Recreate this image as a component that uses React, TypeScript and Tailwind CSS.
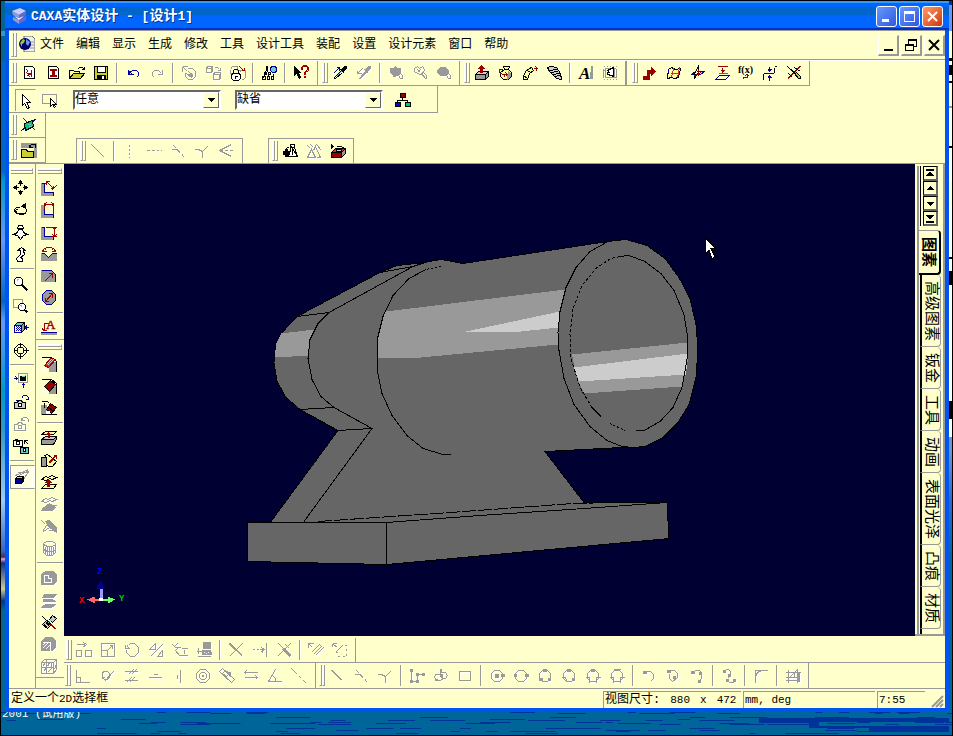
import type { ReactNode } from "react";

/* Sixteen-pixel toolbar art. Each segment is "<stroke><fill> <path>", joined by "|". */
const PALETTE: Record<string, string> = {
  k: "#000000",
  r: "#990000",
  R: "#cc3333",
  b: "#000099",
  B: "#0000ff",
  g: "#999999",
  s: "#cccccc",
  w: "#ffffff",
  y: "#cccc33",
  Y: "#ffff99",
  c: "#66cccc",
  e: "#00cc66",
  n: "none",
};

const ART: Record<string, string> = {
  newPage: "kw M3 1h8l2 2v10h-10z|rr M7 8h3v1h-3z|rn M5 4l2 3M10 4v3M5 7l2 2M6 10l3 1M10 8v3",
  newDrawing: "kw M3 1h8l2 2v10h-10z|rr M5 4h6v1h-6zM7 6h2v3h-2zM5 10h6v1h-6z",
  open: "kY M0 13v-8h4l1 1h5v2|ky M0 13l4-5h11l-4 5z|kn M8 4l2-2h3l2 2M15 1v3h-3",
  save: "ky M1 1h13v13h-13z|kw M4 1h8v6h-8z|kk M4 10h8v4h-8z|ww M9 11h1v2h-1z",
  undo: "bn M3 4v5h5M3 8l4-3h4l2 2v3l-2 2M4 5v3M5 8h1",
  redo: "gn M13 4v5h-5M12 8l-3-3h-4l-2 2v3l2 2",
  regen: "gn M1 1h5M1 1v5M2 2l4 4M6 3h5l3 3v5l-3 3h-4l-3-3v-4M5 8l5 4M7 6l4 4|gg M8 9l2-1 1 2-1 2z",
  cubes: "gn M1 3l1-2h5v5l-1 1h-5zM1 3h5v4M6 3l1-2M8 9l1-2h6v6l-1 1h-6zM8 9h6v5M9 2h3l2 2M15 2v3h-3",
  lock: "gn M1 4l2-3h5v4M1 4v4h2M10 7l2-2h4v7l-2 2h-2M9 5l3 0|rn M10 1l4 4M15 2v3h-3|kw M3 8h7l1 2v3l-2 2h-5l-2-2v-3z|kn M4 8v-3l1-1h3l1 1v3M5 11h3M6 11v2",
  find: "kn M5 1h1v2h-1zM5 4l-3 9M6 4l2 9M1 11h3v3h-3zM6 11h2v3h-2zM10 11h2v3h-2zM3 7h2v2h-2zM7 7h2v2h-2z|bc M10 1h4l1 2v2l-1 2h-3l-2-2v-2z|kn M12 8v4",
  help: "kk M1 1l6 6h-2l2 5-1 1-3-5-2 2z|rn M8 4v-2l2-2h3l2 2v3l-3 2v2M9 4v-2l1-1h3l1 1v2l-3 3v2|rr M11 11h1v1h-1z",
  pick: "kk M12 1h2v2l-3 3-2-2z|kn M8 4l4 4M9 5l-7 7v1h1l7-6M3 13l-1 1|bn M1 8l6-6M7 2h-3M7 2v3|cn M4 11l5-5",
  apply: "gg M12 1h2v2l-3 3-2-2zM9 6l1 1-6 6h-1z|gn M8 4l4 4M1 5v3h4M1 8l5-5",
  fillAll: "gg M2 3h3l2-2 2 2h3v5l-2 2h-5l-3-3z|gn M9 8l3 5h2v-3l-3-3M4 11h3",
  fillPart: "gn M2 3l3-2 2 2 3-2 2 3-1 4-3 1-3-1-3-2zM5 4l3 3M8 4l-3 3M9 8l4 5h1v-3l-3-3z",
  fillOne: "gg M4 2h5l3 3v3l-3 2h-5l-3-3v-2z|gn M9 8l3 5h2v-3l-3-3",
  extrude: "kg M1 9l3-3h10v5l-3 3h-10z|ks M1 9l3-3h10l-3 3z|kn M11 9v5|rr M7 0l3 3h-2v4h-2v-4h-2z",
  spin: "kY M5 1h6l-1 3 3 3v4l-3 3h-5l-3-3v-4l4-3z|gg M10 6l2 2v3l-3 3z|kn M6 4h4|rn M4 4h-3v3l3 2h5M7 7l2 2-2 2M6 8v3",
  sweep: "kY M1 14v-4l3-5 5-3 2 3-4 3-2 6z|kn M1 11l4 1M5 5l3 2|rn M11 3h4M13 1l2 2-2 2M14 2v3",
  loft: "ks M1 2l3-1 6 1 4 6 1 6-5-1-7-7z|kn M2 5l9-1M4 7l8-1M6 9l8-1M8 11l6-1",
  frameText: "gn M1 1h1M4 1h1M7 1h1M10 1h1M13 1h1M1 14h1M4 14h1M7 14h1M10 14h1M13 14h1M1 3v9M2 4v1M3 3v9M12 3v9M14 3v9M2 12h11M2 3h11|kw M5 5l6-3v9l-2-1-4-1v-2h2z",
  arrow: "rr M1 11v3h6v-6h2v2l4-4-4-4v3h-4v6z",
  surface: "kY M2 4l3-2 4 2 5-1-2 9-4 1-3-1-4 1z|Rn M7 3l-2 9M4 8h8M13 2l-2 10|bn M1 12l1-8",
  plane: "bn M1 9h9l4-3h-8M1 9l4-3|kn M8 1l-4 7v5l4-6z|rn M4 10l7-3M8 4v6",
  planes: "rn M3 1h10M8 2v5M6 5h4M7 6h2|Rn M4 8h9|bn M1 14l4-4h10l-4 4z",
  curve: "kn M1 14v-5l1-1h9l1-1v-5M0 14h1M12 1h2|bb M6 4h3l-2 2zM6 12h3l-2-2z|bn M7 1v4M7 11v4M4 8h7",
  erase: "rn M1 14l13-13M1 13l12-12|kn M1 1l12 11M8 2l6 4M2 8l4 4|ky M8 8l4 5h2v-2l-4-4z|cc M8 8l1-1",
  pointer: "kw M4 1l8 8h-4l3 5-2 1-3-5-2 2z",
  boxSelect: "gn M0 2h14v9h-14z|kw M8 6l6 6h-3l2 2-1 1-2-3-2 2z",
  nodes: "kr M5 1h5v4h-5z|kB M0 10h5v4h-5z|ke M10 10h5v4h-5z|kn M7 5v3M2 10v-2h10v2",
  sheet: "rn M2 1l12 12|bn M0 13l15-12|ke M3 6l8-3 1 6-8 4z|cn M6 7h3M7 9h3",
  folder: "gg M0 1h15v4h-15zM13 5h2v10h-2z|ky M0 7h5l1 2h6v6h-12z|kn M8 5l2-3h4v3M8 2v3h3",
  line: "gn M1 1l13 13",
  vDash: "gn M7 1v2M7 5v2M7 9v2M7 13v1",
  hDash: "gn M0 7h3M5 7h3M10 7h2M14 7h1",
  tangent: "gn M1 6h5l4 4M3 2l3 3M7 6l3 4M12 10h0v2M13 13l1 1",
  perp: "gn M0 6h4l4 2v6M8 8l5-5",
  bisect: "gn M1 7l12-6M1 7h3M6 7h3M11 7h3M1 7l12 6",
  gearTri: "kk M1 8h2v-2h2v2h2v3h-2v2h-2v-2h-2z|kw M9 3l-3 10h9z|kn M8 1h4v3h-4zM4 5l3-2M12 4l3 9M10 5v6",
  triangles: "gn M1 14l4-8 4 8zM7 7l2-4 5 11h-4M1 2l3 3M4 1l3 3M10 1l5 6",
  printBlock: "kr M1 9h10v5h-10z|kg M11 9l4-4v5l-4 4z|kR M1 9l4-4h10l-4 4z|ks M6 6h5v2h-5z|kk M1 1l2 2-2 2z|kn M6 3h5l3 2",
  move: "kk M7 0l2 3h-4zM7 14l2-3h-4zM0 7l3-2v4zM14 7l-3-2v4z|kn M7 3v2M7 9v2M3 7h2M9 7h2",
  rotate: "kn M6 5h-3l-2 2v2l2 2h8l2-2v-2l-1-1M5 6l-3 2 1 2 3 2h4l3-2|kk M8 4l4-3v4z",
  lookAt: "kw M5 1h4l1 3h-6zM5 5h4l1 3 4 2-4 1-3 4-3-4-4-1 4-2z",
  walk: "kw M4 4l4-3 4 3h-2l1 4-4 3 2 1v3h-5l-1-3 4-4v-4z",
  zoom: "kw M3 1h4l2 2v4l-2 2h-4l-2-2v-4z|cn M3 3h2M3 5l2-2|kn M8 8l6 6M9 8l6 6M8 9l6 6",
  zoomWin: "gn M0 1h9v8h-9z|kw M7 5h3l2 2v3l-2 2h-3l-2-2v-3z|cn M7 7l2 1|kn M11 11l4 3M11 12l3 3",
  cubeView: "kc M1 5l3-3h7l-2 3z|bw M1 5h7v7h-7z|kg M8 5l3-3v7l-3 3z|bn M2 6h1M4 6h1M6 6h1M3 7h1M5 7h1M2 8h1M4 8h1M6 8h1M3 9h1M5 9h1M2 10h1M4 10h1M6 10h1|bb M11 7l2-2v4z|bn M12 7h3",
  target: "kn M5 2h4l4 4v4l-4 4h-4l-4-4v-4zM7 0v5M7 11v5M0 8h4M10 8h5|bn M5 5h4l1 1v4l-1 1h-4l-1-1v-4z",
  fit: "gn M5 1h9v9h-9z|kk M7 4h5v4h-5z|cn M8 4h3l1-1|bn M0 6h4M2 4l2 2-2 2M10 15v-4M8 13l2-2 2 2",
  camera: "ks M1 8h3l1-2h3l1 2h3v6h-11z|kw M5 9h3v3h-3z|bn M8 4l2-3h3l2 2v2M15 2v3h-3M2 6h2",
  cameraOff: "gn M1 8h3l1-2h3l1 2h3v6h-11zM5 9h3v3h-3zM8 4l2-3h3l2 2v2M8 1v3h3",
  cameras: "kw M0 2h9v6h-9zM3 3h3v3h-3z|kn M1 1h3M11 2l4 4M11 2h3M11 2v3|kc M7 9h8v6h-8z|kw M10 10h2v3h-2z",
  perspective: "gn M1 6l13-6M5 6l9-5M9 10l5-8M3 3h11|kb M1 9h6v5h-6z|ks M1 9l2-2h6l-2 2z|kk M7 9l2-2v5l-2 2z",
  dimAlign: "gg M0 3h3v9h9v3h-12z|bn M0 3h3v9h9v3|rn M5 1l7 7M5 1v3M5 1h3M12 8v-3M12 8h-3M3 4l3-3M10 10l5-5",
  dimHoriz: "gg M0 3h3v9h9v3h-12z|bn M3 3v9h9v3|rn M3 0v6M12 0v12M3 2h9M5 0l-2 2 2 2M10 0l2 2-2 2",
  dimVert: "gg M0 3h3v9h9v3h-12z|bn M0 3h3v9h9v3|rn M4 3h11M10 12h5M13 3v9M11 5l2-2 2 2M11 10l2 2 2-2",
  dimAngle: "gg M0 7h3l4 4 4-4h4v7h-15z|bn M0 7h3l4 4 4-4h4|rn M0 6l3-4M15 6l-3-4M3 4l2-3h5l2 3M2 2v3h3M13 2v3h-3",
  dimRadius: "gg M0 2h10l4 4v7h-14z|bn M0 2h10l4 4v7|rn M3 13l8-8M11 5h-4M11 5v4",
  dimDiameter: "gg M5 0h5l4 4v6l-4 4h-5l-4-4v-6z|bn M5 0h5l4 4v6l-4 4h-5l-4-4v-6z|rn M4 11l7-8M4 11v-4M4 11h3M11 3v4M11 3h-4",
  fillet: "gg M8 6h7v9h-7z|kn M0 1h10l5 4v10|rR M3 9l6-7 5 1-7 8z|sn M5 8l5-5M6 9l6-6|wn M1 12l5 2M1 13l3 1",
  chamfer: "gg M8 6h7v9h-7z|kn M0 1h10l5 4v10|kr M3 8l6-6 5 4-6 7z|wn M1 12l5 2M1 13l3 1",
  draft: "gg M0 5h5v9h-5z|kn M0 1h6l2 2M3 2v5M0 14h15|kr M5 9l4-6 6 4-5 6z|kn M7 7l5 4M9 5l4 4|ww M5 11h3v2h-3z",
  pull: "kg M0 9l4-3h11v3l-3 5h-12z|kY M0 4l4-3h11l-3 3z|ks M0 9l4-3h11l-3 3z|rr M7 2l2 2h-1v3h-1v-3h-2z",
  bend: "kg M0 5h5v9h-5z|kY M3 3l3-1 9 7-4 5h-4l-2-2v-7z|rn M7 11l4-5 4-3M12 3h3v3M8 11l4-5",
  raise: "kY M0 5l4-3 3 1 3-2 5 2-4 2-3-1-3 2zM0 14l4-4h11l-3 4z|rr M7 5l3 3h-2v4h-2v-4h-2z",
  thicken: "gn M0 5l4-3 3 1 3-2 5 2-4 2-3-1-3 2zM1 12l4-2M15 9h-4|gg M0 14l4-4 4-3 6 4-3 3z",
  trimFace: "gg M4 3l4-1 7 7v5l-8-6z|gn M0 2l4 4M1 13l4-6M2 13l6-4M8 12l7-1",
  wrap: "gn M2 3l3-2h6l3 2v9l-3 3h-6l-3-3zM2 4l4 2h5l3-2M4 6v8M6 6v9M8 6v9M10 6v9M12 6v7M2 9l4 2h5l3-2",
  shell: "gg M0 4l4-3h8l3 3v7l-3 3h-12z|wn M3 5h4v3h3v4h-7z",
  slab: "gg M3 2h12l-3 3h-11zM2 7h9l3 2h-12zM4 12h10l-4 3h-10z|wn M2 6h12M1 11h12",
  detach: "ks M8 5l3-4 4 3-4 4zM1 10l4-4 4 5-3 3z|kn M1 2l14 13M2 9l4 5M4 7l4 5|cn M6 9l4-4|rn M9 10l5 5M10 10l5 5",
  section: "gg M0 5l4-4h7l3 3v7l-3 3h-11z|wn M1 6h8v8M1 9l3-3M1 12l6-6M4 13l4-4",
  block: "gn M0 4l3-3h12v10l-3 4h-12zM0 4h12v11M12 4l3-3M5 15v-14M0 9h12M1 8l3-4M2 13l3-4M6 14l5-5M8 4l-2 4M13 11l2-6M10 4v4",
  glue: "gn M0 8h5v6h-5zM9 8h6v6h-6zM0 2h8M7 0l3 2-3 2M8 1v3",
  scale: "gn M1 1h13v13h-13zM1 8h6v6M7 8l4-4M9 3h3v3",
  turn: "gn M4 3l2-2h4l4 4v5l-4 4h-4l-4-4v-3M1 2v4h4M3 3l1 3",
  mirror: "gn M1 7l6-6v6zM9 14h5v-6zM2 14l12-12",
  offset: "gn M0 2l3 3h5M3 8l4 5h8M9 6h6M12 7v4M5 1l-4 4M3 8l3-3",
  pattern: "gg M7 0h7v6h-7zM6 8h8l1 4h-9z|gn M2 5v6M0 9h5M1 14h13|wn M7 10h1M9 11h1M11 10h1",
  cross: "gn M1 1l13 13M2 1l12 12M1 2l6 6M14 1l-13 13",
  extend: "gn M0 7h2M4 7h2M7 7h5M9 5l3 2-3 2M10 5v5M14 1v13M13 1h1M13 14h1",
  crossPen: "gn M1 14l13-13M2 1l5 5M9 2l4 4|gg M6 7l2-1 6 6-1 2z",
  dual: "gn M0 1v4M0 1h5M0 1l4 4M3 10l8-8 2 2-8 8M7 13l8-8",
  dualDash: "gn M0 1v3M0 1h4M1 2l4 3M3 10l7-7M12 3h2M14 6v2M14 11v2M12 14h-2M7 14h-2M5 11l-1-2",
  square: "gn M1 1v13h13M1 9h4v5",
  noTangent: "gn M4 3h4l2 2v4l-2 2h-3l-2-2v-4zM5 13l9-10M3 10l3-2",
  parallel: "gn M1 3h13M1 12h13M5 6l5-5M8 6l5-5M3 14l5-5M6 14l5-5",
  horiz: "gn M1 9h13M6 6h4",
  vert: "gn M9 1v13M6 6v4",
  concentric: "gn M5 1h5l4 4v5l-4 4h-5l-4-4v-5zM6 4h3l2 2v3l-2 2h-3l-2-2v-3z|gg M7 7h1v1h-1z",
  slot: "gn M0 3l3-3 12 11-3 3zM3 5l3-3 4 3-3 3zM7 4h4v2",
  equal: "gn M1 4h13M1 9h13M3 2l-2 2 2 2M12 7l2 2-2 2",
  angle: "gn M8 1l-7 12h13M5 7l3 3v3",
  gapLine: "gn M0 0l6 6M8 8l2 2M12 12l3 3",
  shortLine: "gn M2 2l10 10M3 2l10 10",
  poly: "gg M1 1h2v2h-2zM1 12h2v2h-2zM7 12h2v2h-2zM7 5h2v2h-2zM13 5h2v2h-2z|gn M2 2v11h6v-7h6",
  spline: "gn M2 6h4l3 3v2l-3 1h-3l-2-3zM7 4h5l2 3-2 3h-3l-2-3z|gg M7 1h1v2h-1zM7 6h2v2h-2zM2 11h2v1h-2z",
  rect: "gn M2 3h11v9h-11z",
  circleDot: "gn M5 2h5l3 3v5l-3 3h-5l-3-3v-5z|gg M6 6h3v3h-3zM12 6h3v2h-3z",
  circleTwo: "gn M5 2h5l3 3v5l-3 3h-5l-3-3v-5z|gg M1 6h2v2h-2zM12 6h3v2h-3z",
  circleThree: "gn M5 2h5l3 3v5l-3 3h-5l-3-3v-5z|gg M6 1h3v2h-3zM2 10h3v2h-3zM11 10h2v2h-2z",
  circleTan: "gn M5 2h5l3 3v5l-3 3h-5l-3-3v-5zM0 9h4l2 5|gg M6 1h3v2h-3zM11 10h2v2h-2z",
  circleTan2: "gn M5 2h5l3 3v5l-3 3h-5l-3-3v-5zM0 9h4l0 5M15 9h-4l0 5|gg M6 1h3v2h-3z",
  circleTan3: "gn M5 2h5l3 3v5l-3 3h-5l-3-3v-5zM4 1h7M0 9h4l0 5M15 9h-4l0 5",
  arcA: "gg M2 3h3v2h-3z|gn M5 3h4l3 3v4l-3 3",
  arcB: "gg M2 2h3v2h-3zM8 8h2v2h-2z|gn M5 2h4l3 3v4l-5 4-3-3v-5",
  arcC: "gg M2 3h3v2h-3zM10 4h2v2h-2zM9 12h2v2h-2z|gn M5 2h5l2 3v5l-2 3",
  bspline: "gg M2 2h2v2h-2zM7 6h2v2h-2zM5 11h2v2h-2zM12 11h2v2h-2z|gn M4 1h3l2 2v3M6 10l2-2M7 14h5",
  corner: "gn M2 14v-12h12M2 8l2-4 4-2",
  project: "gg M12 5h2v8h-2z|gn M0 4h15M0 9h12M0 12h12M3 1v13M12 1v13M4 9l8-8M9 4v5",
};

function Art({ name, off }: { name: string; off?: boolean }) {
  const parts = ART[name].split("|");
  return (
    <svg width="16" height="16" viewBox="0 0 16 16" shapeRendering="crispEdges" className="block shrink-0 overflow-visible" aria-hidden="true">
      {off && (
        <g transform="translate(1.5 1.5)">
          {parts.map((p, i) => (
            <path key={i} d={p.slice(3)} stroke="#ffffff" fill={p[1] === "n" ? "none" : "#ffffff"} />
          ))}
        </g>
      )}
      <g transform="translate(.5 .5)">
        {parts.map((p, i) => (
          <path key={i} d={p.slice(3)} stroke={PALETTE[p[0]]} fill={PALETTE[p[1]]} />
        ))}
      </g>
    </svg>
  );
}

function Letters({ kind }: { kind: string }) {
  if (kind === "letterA")
    return (
      <svg width="16" height="16" viewBox="0 0 16 16" className="block overflow-visible" aria-hidden="true">
        <path d="M13 1l2 0v13h-3z" fill="#999999" shapeRendering="crispEdges" />
        <text x="1" y="14" fontSize="17" fontWeight="bold" fontStyle="italic" fontFamily="Liberation Serif, serif">A</text>
      </svg>
    );
  if (kind === "fx")
    return (
      <svg width="16" height="16" viewBox="0 0 16 16" className="block overflow-visible" aria-hidden="true">
        <text x="0" y="8" fontSize="10" fontWeight="bold" fontFamily="Liberation Serif, serif">f(x)</text>
        <path d="M5 14v-2h4v-3M7 11l2-2 2 2" fill="none" stroke="#990000" shapeRendering="crispEdges" />
      </svg>
    );
  return (
    <svg width="16" height="16" viewBox="0 0 16 16" className="block overflow-visible" aria-hidden="true">
      <text x="5" y="9" fontSize="13" fontFamily="Liberation Serif, serif" fill="#990000" stroke="#990000" strokeWidth=".4">A</text>
      <path d="M8 3H4L3 11M1 8l2 3 3-1" fill="none" stroke="#990000" shapeRendering="crispEdges" />
      <path d="M0 13h16v2H0z" fill="#999999" />
      <path d="M0 12h16v1H0z" fill="#000099" />
    </svg>
  );
}

const TEXT_ICONS = ["letterA", "fx", "letterNote"];

/* "-" is a separator; a trailing "!" marks a disabled tool. */
function Tools({ items, vertical }: { items: string; vertical?: boolean }) {
  return (
    <>
      {items.split(" ").map((item, i) => {
        if (item === "-")
          return vertical ? (
            <span key={i} className="mx-px flex h-2 items-center">
              <span className="h-0.5 w-full border-b border-white bg-[#999999]" />
            </span>
          ) : (
            <span key={i} className="flex w-2 justify-center">
              <span className="my-0.5 w-0.5 border-r border-white bg-[#999999]" />
            </span>
          );
        const off = item.endsWith("!");
        const name = off ? item.slice(0, -1) : item;
        return (
          <button key={i} type="button" aria-label={name} disabled={off} className={vertical ? "flex h-[22px] items-center justify-center pr-0.5" : "flex w-6 items-center justify-center"}>
            {TEXT_ICONS.includes(name) ? <Letters kind={name} /> : <Art name={name} off={off} />}
          </button>
        );
      })}
    </>
  );
}

function Grip() {
  return (
    <span className="my-0.5 flex shrink-0">
      <span className="w-[3px] border-r border-b border-l border-[#999999] border-l-white" />
      <span className="w-[3px] border-r border-b border-l border-[#999999] border-l-white" />
    </span>
  );
}

function GripH() {
  return (
    <span className="mx-0.5 mb-[3px] block pt-1">
      <span className="block h-[3px] border-t border-r border-b border-[#999999] border-t-white" />
      <span className="block h-[3px] border-t border-r border-b border-[#999999] border-t-white" />
    </span>
  );
}

function Bar({ items, tail, children }: { items?: string; tail: string; children?: ReactNode }) {
  return (
    <div className={`flex border-[#999999] ${tail}`} role="toolbar">
      <Grip />
      {items && <Tools items={items} />}
      {children}
    </div>
  );
}

function Combo({ label, value }: { label: string; value: string }) {
  return (
    <div className="relative h-5 w-[148px] border-2 border-[#666666] border-r-white border-b-white bg-white">
      <select aria-label={label} className="block h-4 w-full appearance-none bg-white text-xs leading-4 outline-none">
        <option>{value}</option>
      </select>
      <span className="pointer-events-none absolute top-0 right-0 flex h-4 w-4 items-center justify-center border border-white border-r-[#666666] border-b-[#666666] bg-[#ffffcc]">
        <svg width="7" height="4" viewBox="0 0 7 4" shapeRendering="crispEdges"><path d="M0 0h7L3.5 4z" /></svg>
      </span>
    </div>
  );
}

const MENUS = ["文件", "编辑", "显示", "生成", "修改", "工具", "设计工具", "装配", "设置", "设计元素", "窗口", "帮助"];
const TABS = ["图素", "高级图素", "钣金", "工具", "动画", "表面光泽", "凸痕", "材质"];

function TitleBar() {
  const frame = "flex h-[21px] w-[21px] items-center justify-center rounded-[3px] border border-white";
  return (
    <header className="flex h-[29px] shrink-0 items-center bg-[linear-gradient(#3399ff_0_2px,#0066ff_2px_6px,#0066cc_6px_14px,#0066ff_14px_27px,#0033cc_27px_29px)] pt-px pr-1.5 pl-[7px]">
      <svg width="16" height="16" viewBox="0 0 16 16" className="shrink-0" aria-hidden="true">
        <path d="M0 3l8-3 6 3-7 4z" fill="#ccccff" />
        <path d="M0 3l7 4v3l-6-3zM1 9l6 3v4l-6-4z" fill="#9999cc" />
        <path d="M7 7l7-4v4l-5 3 5-2v4l-7 4v-4l-3-2 3-1z" fill="#6666cc" />
        <path d="M2 8l5 2 5-2-5 4z" fill="#eeeeff" />
      </svg>
      <h1 className="ml-[3px] flex-1 text-sm font-bold whitespace-pre text-white [text-shadow:1px_1px_#003399]">
        <span className="text-[13px]">CAXA</span>实体设计<span className="text-[13px]"> - [</span>设计<span className="text-[13px]">1]</span>
      </h1>
      <div className="flex gap-0.5">
        <button type="button" aria-label="最小化" className={`${frame} bg-linear-to-br from-[#6699ff] to-[#3355dd]`}>
          <svg width="15" height="15" viewBox="0 0 15 15"><path d="M3 10h7v3H3z" fill="#fff" /></svg>
        </button>
        <button type="button" aria-label="最大化" className={`${frame} bg-linear-to-br from-[#6699ff] to-[#3355dd]`}>
          <svg width="15" height="15" viewBox="0 0 15 15" shapeRendering="crispEdges"><path d="M2 2h11v11H2zM3 5v7h9V5z" fill="#fff" fillRule="evenodd" /></svg>
        </button>
        <button type="button" aria-label="关闭" className={`${frame} bg-linear-to-br from-[#ff9966] to-[#cc3300]`}>
          <svg width="15" height="15" viewBox="0 0 15 15"><path d="M3 3l9 9M12 3l-9 9" stroke="#fff" strokeWidth="2" /></svg>
        </button>
      </div>
    </header>
  );
}

function MenuBar() {
  const box = "flex h-[21px] w-[21px] items-center justify-center border-t border-r-2 border-b-2 border-l border-white border-r-[#999999] border-b-[#999999]";
  return (
    <nav className="flex h-[30px] shrink-0 border-t border-b border-[#999999] pl-0.5">
      <Grip />
      <svg width="16" height="16" viewBox="0 0 16 16" className="mt-[5px] ml-0.5 shrink-0" aria-hidden="true">
        <path d="M5 0h8l3 3v13H5z" fill="#eeeeee" stroke="#666666" />
        <path d="M11 6h4M11 9h4M11 12h4" stroke="#999999" />
        <circle cx="6" cy="8" r="6" fill="#000066" />
        <path d="M1 7l3-4 2 1-1 3-2 1v3z" fill="#99cc33" />
        <path d="M7 3l4 3-2 4-2-2z" fill="#6699ff" />
      </svg>
      <ul className="ml-[5px] flex flex-1 items-center gap-3 text-xs">
        {MENUS.map((m) => (
          <li key={m}><button type="button" className="block leading-4 whitespace-nowrap">{m}</button></li>
        ))}
      </ul>
      <div className="flex gap-0.5 pt-1">
        <button type="button" aria-label="最小化文档" className={box}>
          <svg width="14" height="14" viewBox="0 0 14 14"><path d="M3 11h9v2H3z" /></svg>
        </button>
        <button type="button" aria-label="还原文档" className={box}>
          <svg width="14" height="14" viewBox="0 0 14 14" shapeRendering="crispEdges"><path d="M4 2.500h9M4 1.500h9M4.500 3v3M12.500 3v6M10 8.500h3M1 6.500h9M1 7.500h9M1.500 7v6M9.500 7v6M1 12.500h9" stroke="#000" fill="none" /></svg>
        </button>
        <button type="button" aria-label="关闭文档" className={box}>
          <svg width="14" height="14" viewBox="0 0 14 14"><path d="M2 2l10 10M12 2L2 12" stroke="#000" strokeWidth="2" /></svg>
        </button>
      </div>
    </nav>
  );
}

function Scene() {
  return (
    <svg viewBox="64 164 851 471" className="absolute inset-0 h-full w-full" shapeRendering="crispEdges" role="img" aria-label="三维模型">
      <path fill="#666666" stroke="#000000" d="M247 522L271 521 338 430 300 409 286 397 277 381 274 362 276 344 283 331 297 316 380 272 397 265 425 262 440 259 448 260 463 263 608 241 626 239 647 245 665 258 679 277 690 298 696 324 698 348 696 377 689 404 678 422 663 437 645 446 634 447 622 447 545 451 584 502 667 502 669 538 387 564 248 561Z" />
      <path fill="#999999" d="M386 311L565 289 560 311 558 344 410 358 377 357 377 340 383 315ZM281 333L314 329 310 341 309 355 275 357 276 343ZM572 354L688 342 688 359 682 386 584 393 577 378Z" />
      <path fill="#cccccc" d="M466 331L560 311 559 327 511 332ZM574 367L688 353 686 374 579 381Z" />
      <g fill="none" stroke="#000000">
        <path d="M608 241L590 251 576 267 566 287 560 311 558 332 559 350 564 378 574 404 590 426 607 440 622 446 634 447" />
        <path d="M620 256L629 255 645 261 661 273 674 290 684 314 688 338 687 359 682 387 673 407 660 421 644 430 636 430" />
        <path strokeDasharray="3 2" d="M620 256L611 258 597 267 582 285 573 308 570 334 571 358 580 387 592 407" />
        <path d="M592 407L601 416" />
        <path strokeDasharray="2 2" d="M610 423L625 430M441 266L426 269" />
        <path d="M426 269L409 278 393 295 383 316 377 340 377 368 382 393 392 415 407 435 423 448 443 454 451 454" />
        <path d="M297 316L329 312 413 266 425 262M380 272L413 266M329 312L318 323 310 339 308 358 312 379 321 396 334 407 372 428M300 409L334 407M338 430L372 428 304 521" />
        <path d="M247 522L386 522 387 564M386 522L480 515 584 508 667 502" />
        <path strokeDasharray="14 2" d="M318 521L450 512 573 503 614 502" />
      </g>
      <path fill="#9999ff" d="M100 587h3v11h-3z" />
      <path fill="#000099" d="M101 579l3 9h-7z" />
      <path fill="#ff6666" d="M87 599l8-3v2h6v2h-6v3z" />
      <path fill="#66ff66" d="M115 599l-7-3v2h-6v2h6v3z" />
      <circle cx="101" cy="599" r="2" fill="#ffffff" />
      <g fontSize="9" fontWeight="bold" fontFamily="Liberation Mono, monospace">
        <text x="97" y="573" fill="#0000ff">Z</text>
        <text x="79" y="602" fill="#ff0000">X</text>
        <text x="119" y="600" fill="#00cc00">Y</text>
      </g>
      <path fill="#ffffff" stroke="#000000" d="M705 237l11 11h-5l4 8-3 2-3-8-4 4z" />
    </svg>
  );
}

function Catalog() {
  const arrows = ["M2 1h8v2H2zM6 3l4 5H2z", "M6 3l4 4H2z", "M2 4h8L6 8z", "M2 2h8L6 7zM2 8h8v2H2z"];
  const selected = "mr-0.5 rounded-r-sm border-t border-r-2 border-b-2 border-black border-t-[#999999] py-1.5 pr-1 font-bold";
  const plain = "mr-0.5 ml-px rounded-r-sm border-r border-b border-l-2 border-[#999999] border-l-black pt-1.5 pr-1 pb-[5px]";
  return (
    <aside className="flex w-[30px] shrink-0 flex-col border-r-2 border-b-2 border-[#999999] bg-[#ffffcc] pt-0.5">
      <div className="ml-0.5 flex flex-1 flex-col border-l-2 border-[#999999]">
        <div className="mb-1 ml-px flex flex-col items-start border-l border-black pl-0.5">
          {arrows.map((d) => (
            <button key={d} type="button" aria-label="滚动" className="flex h-[15px] w-[15px] items-center justify-center border border-r-2 border-b-2 border-black border-r-[#666666] border-b-[#666666]">
              <svg width="12" height="11" viewBox="0 0 12 11" className="shrink-0" shapeRendering="crispEdges"><path d={d} /></svg>
            </button>
          ))}
        </div>
        <div role="tablist" className="flex flex-1 flex-col text-[15px]">
          {TABS.map((t, i) => (
            <button key={t} type="button" role="tab" aria-selected={i === 0} className={i === 0 ? selected : plain}>
              <span className="block w-4 leading-4 whitespace-nowrap [text-orientation:sideways] [writing-mode:vertical-rl]">{t}</span>
            </button>
          ))}
          <span className="ml-px flex-1 border-l-2 border-black" />
        </div>
      </div>
    </aside>
  );
}

/* Dark ripples on the sea of the desktop picture. */
function Sea() {
  const waves = Array.from({ length: 120 }, (_, i) => {
    const x = (i * 379 + i * i * 17) % 960;
    const y = (i * 7 + ((i * i) % 11)) % 22;
    return `M${x} ${y + 0.5}h${6 + ((i * 13) % 30)}`;
  }).join("");
  return (
    <svg className="absolute inset-0 h-full w-full" viewBox="0 0 953 23" preserveAspectRatio="none" shapeRendering="crispEdges" aria-hidden="true">
      <path d={waves} stroke="#003399" />
      <path d="M760 6h190v4h-130v4h130v6h-80v-4h-60v-5h-50z" fill="#003399" />
    </svg>
  );
}

export default function App() {
  return (
    <div className="flex h-screen flex-col overflow-hidden bg-black py-px pl-px font-['Liberation_Mono','Noto_Sans_CJK_SC',monospace] text-black">
      <div className="flex min-h-0 flex-1">
        <div className="w-1 shrink-0 bg-[linear-gradient(#006699_0_30px,#3399cc_30px_35px,#006699_35px_60px,#0066cc_60px_170px,#0099cc_180px,#6699ff_240px,#0066cc_300px,#6699ff_320px,#0099cc_390px,#3399cc_430px,#99ccff_500px,#3366cc_550px,#333366_556px,#ff99cc_558px,#003399_562px,#cccc99_588px,#003399_600px,#006699_610px)]" />
        <div className="flex min-w-0 flex-1 flex-col bg-[#0055ee]">
          <TitleBar />
          <div className="mr-1 mb-1 ml-1 flex min-h-0 flex-1 flex-col bg-[#ffffcc]">
            <MenuBar />
            <div className="flex h-[26px] shrink-0 border-t border-white">
              <Bar items="newPage newDrawing open save - undo redo! - regen! cubes! lock - find - help" tail="border-r border-b pr-1 pl-0.5" />
              <Bar items="pick apply! - fillAll! fillPart! fillOne!" tail="border-r border-b pr-[3px] pl-1" />
              <Bar items="extrude spin sweep loft - letterA frameText" tail="border-r border-b pr-[3px] pl-1" />
              <Bar items="arrow surface plane planes fx curve erase" tail="border-r border-b border-l pr-[3px] pl-[5px]" />
            </div>
            <div className="flex h-[27px] shrink-0">
              <div className="flex w-[429px] items-center border-r border-b border-[#999999] pt-0.5 pl-1.5" role="toolbar">
                <button type="button" aria-label="选择" className="flex h-[22px] w-[21px] items-center justify-center border-t border-r border-l border-[#999999] border-r-white">
                  <Art name="pointer" />
                </button>
                <button type="button" aria-label="框选" className="ml-0.5 flex h-[22px] w-6 items-center justify-center">
                  <Art name="boxSelect" />
                </button>
                <div className="ml-[11px]"><Combo label="选择过滤" value="任意" /></div>
                <div className="ml-3.5"><Combo label="配置" value="缺省" /></div>
                <button type="button" aria-label="结构" className="ml-2.5 flex w-5 justify-center"><Art name="nodes" /></button>
              </div>
            </div>
            <div className="flex h-[25px] shrink-0">
              <Bar items="sheet" tail="border-r border-b pl-0.5 pr-1" />
            </div>
            <div className="flex h-[26px] shrink-0 border-b border-[#999999]">
              <Bar items="folder" tail="border-r border-b pl-0.5 pr-1" />
              <div className="ml-[30px] flex border-t border-l border-[#999999]">
                <Bar items="line! - vDash! hDash! tangent! perp! bisect!" tail="border-r pl-[3px] pr-1" />
              </div>
              <div className="ml-[25px] flex border-t border-l border-[#999999]">
                <Bar items="gearTri triangles! printBlock" tail="border-r pl-[3px] pr-[3px]" />
              </div>
            </div>

            <div className="flex min-h-0 flex-1">
              <div className="flex w-[27px] shrink-0 flex-col border-r border-[#999999]" role="toolbar">
                <GripH />
                <Tools vertical items="move rotate lookAt walk - zoom zoomWin cubeView target - fit camera cameraOff! cameras -" />
                <button type="button" aria-label="透视" className="ml-px flex h-6 items-center justify-center border border-[#999999] border-r-white bg-[#ffffe6] pr-0.5">
                  <Art name="perspective" />
                </button>
              </div>
              <div className="flex w-7 shrink-0 flex-col">
                <div className="flex flex-col border-b border-[#999999]" role="toolbar">
                  <GripH />
                  <Tools vertical items="dimAlign dimHoriz dimVert dimAngle dimRadius dimDiameter - letterNote" />
                </div>
                <div className="flex flex-col border-b border-[#999999]" role="toolbar">
                  <GripH />
                  <Tools vertical items="fillet chamfer draft - pull bend raise thicken! trimFace! wrap! - shell! slab! detach section! block!" />
                </div>
              </div>
              <div className="flex min-w-0 flex-1 flex-col">
                <div className="flex min-h-0 flex-1">
                  <main className="relative min-w-0 flex-1 bg-[#000033]"><Scene /></main>
                  <Catalog />
                </div>
                <div className="flex h-[27px] shrink-0 border-b border-[#999999] pt-0.5">
                  <Bar items="glue! scale! turn! mirror! offset! pattern! - cross! extend! crossPen! - dual! dualDash!" tail="border-r pl-0.5 pr-[3px]" />
                </div>
                <div className="flex h-[25px] shrink-0">
                  <Bar items="square! noTangent! parallel! horiz! vert! concentric! slot! equal! angle! gapLine!" tail="border-r pl-px pr-1" />
                  <Bar items="shortLine! tangent! perp! - poly! spline! rect! - circleDot! circleTwo! circleThree! circleTan! circleTan2! circleTan3! - arcA! arcB! arcC! - bspline! - corner! - project!" tail="border-r pl-[3px] pr-[3px]" />
                </div>
              </div>
            </div>

            <footer className="flex h-5 shrink-0 items-end border-t border-[#999999] pr-px text-xs leading-4">
              <p className="h-[17px] flex-1 pl-0.5">定义一个<span className="text-[11px]">2D</span>选择框</p>
              <p className="flex h-[17px] w-[138px] gap-2.5 border-t border-l border-[#999999] pl-px whitespace-nowrap">
                <span>视图尺寸:</span>
                <span className="text-[11px]">880</span>
                <span className="text-[11px]">x</span>
                <span className="text-[11px]">472</span>
              </p>
              <p className="ml-0.5 h-[17px] w-[132px] border-t border-l border-[#999999] pl-px text-[11px]">mm, deg</p>
              <p className="ml-0.5 h-[17px] w-12 border-t border-l border-[#999999] pl-px text-[11px]">7:55</p>
              <svg width="13" height="13" viewBox="0 0 13 13" className="ml-1.5" aria-hidden="true">
                <path d="M1 12L12 1M5 12l7-7M9 12l3-3" stroke="#999999" strokeWidth="2" />
              </svg>
            </footer>
          </div>
        </div>
        <div className="mr-px w-[3px] shrink-0 bg-[linear-gradient(#003399_0_4px,#6699ff_4px_30px,#ffffcc_30px_57px,#000_57px_60px,#fff_60px_64px,#000_64px_74px,#fff_74px_80px,#000_80px_82px,#ffffcc_82px_105px,#999_105px_107px,#fff_107px_145px,#000_145px_147px,#fff_147px_180px,#ffffcc_180px_204px,#fff_204px_256px,#000_256px_258px,#fff_258px_270px,#000_270px_284px,#fff_284px_400px,#000_400px_418px,#fff_418px_436px,#6699cc_436px_450px,#3366cc_500px,#006699_560px)]" />
      </div>
      <div className="relative mr-px h-[23px] shrink-0 overflow-hidden bg-[#006699]">
        <Sea />
        <p className="relative -mt-1 ml-px text-[11px] leading-3 text-white">2001 (试用版)</p>
      </div>
    </div>
  );
}
